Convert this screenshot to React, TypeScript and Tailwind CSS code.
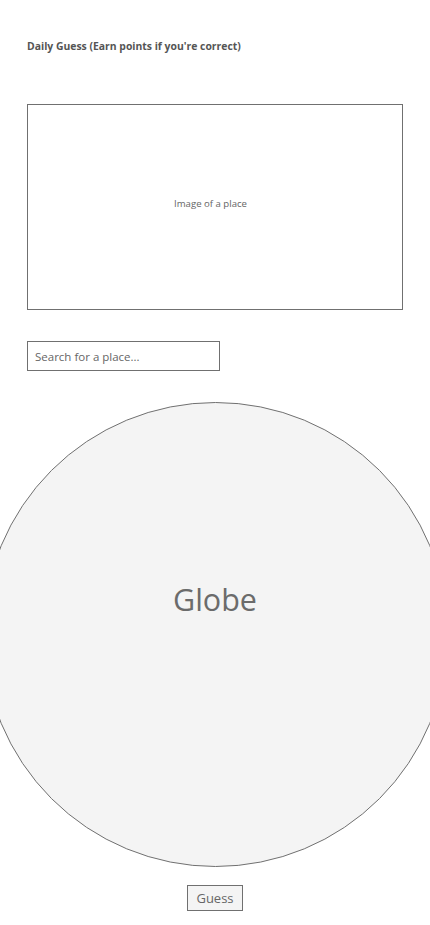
export default function App() {
  return (
    <div className="w-[430px] min-h-[925px] overflow-hidden bg-white font-['Open_Sans',sans-serif] text-[#666]">
      <div className="px-[27px] pt-[38px]">
        <h1 className="text-[10.4px] leading-[16px] font-bold text-[#555]">
          Daily Guess (Earn points if you're correct)
        </h1>

        <div className="mt-[50px] h-[206px] border border-[#707070] flex items-center justify-center pb-[6px] pr-[9px]">
          <span className="text-[9.6px] text-[#666]">Image of a place</span>
        </div>

        <input
          type="text"
          placeholder="Search for a place..."
          className="mt-[31px] block w-[193px] h-[30px] border border-[#707070] px-[7px] text-[11.5px] placeholder:text-[#666] outline-none"
        />
      </div>

      <div className="mt-[31px] flex justify-center">
        <div className="shrink-0 w-[465px] h-[465px] rounded-full border border-[#707070] bg-[#f4f4f4] flex items-center justify-center pb-[70px]">
          <span className="text-[30.5px] text-[#6b6b6b]">Globe</span>
        </div>
      </div>

      <div className="mt-[18px] flex justify-center">
        <button className="w-[56px] h-[26px] border border-[#707070] bg-[#f4f4f4] text-[13px] leading-[24px] text-[#666]">
          Guess
        </button>
      </div>
    </div>
  );
}
